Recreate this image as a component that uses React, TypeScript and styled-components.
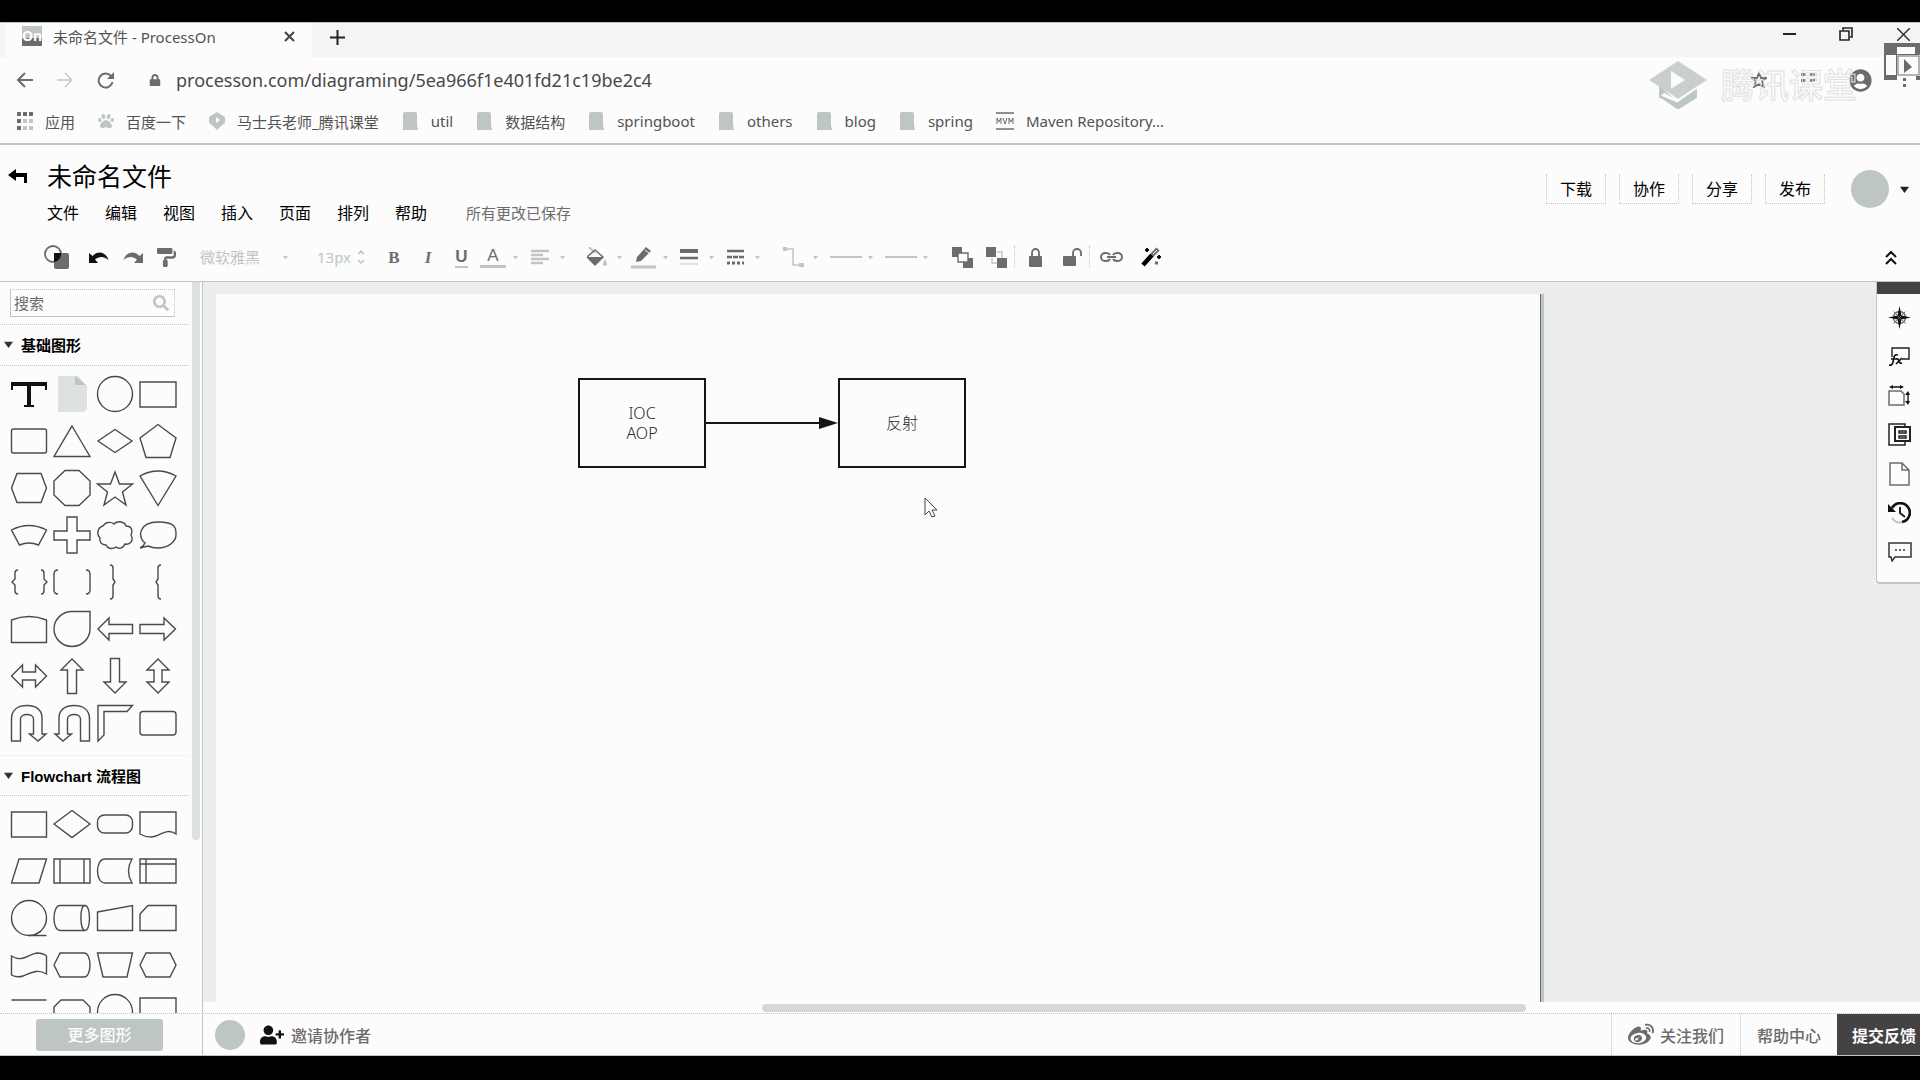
import React from "react";
import styled, { createGlobalStyle } from "styled-components";
import { FaLock, FaUserPlus, FaWeibo, FaSearch, FaPaintRoller, FaPaw, FaUserCircle } from "react-icons/fa";

const ink = "#6f6b6c";
const soft = "#bec6c5";
const paper = "#fcfcfc";
const sans = `"Noto Sans", "Noto Sans CJK SC", sans-serif`;

const GlobalStyle = createGlobalStyle`
  * { box-sizing: border-box; }
  body { margin: 0; background: #000; font-family: ${sans}; color: #000; }
  button, input, select { font: inherit; color: inherit; border: 0; padding: 0; margin: 0; background: none; }
  a { color: inherit; text-decoration: none; }
  svg { display: block; flex: none; }
  h1, h2 { margin: 0; }
`;

const Screen = styled.div`
  height: 100vh;
  padding: 22px 0 24px;
  display: flex;
  flex-direction: column;
  overflow: hidden;
  position: relative;
`;

/* ---------- browser chrome ---------- */

const TabStrip = styled.div`
  flex: none;
  height: 35px;
  display: flex;
  align-items: stretch;
  background: #f3f5f5;
  border-top: 1px solid ${soft};
  padding-left: 6px;
`;

const BrowserTab = styled.div`
  width: 306px;
  padding: 0 14px 8px 16px;
  background: ${paper};
  display: flex;
  align-items: center;
  gap: 11px;
  font-size: 15px;
  color: #555253;
`;

const Favicon = styled.span`
  width: 20px;
  height: 20px;
  background: linear-gradient(${soft} 60%, ${ink} 60%);
  color: ${paper};
  font-size: 14px;
  font-weight: 700;
  line-height: 19px;
  text-align: center;
`;

const TabTitle = styled.span`
  flex: 1;
  white-space: nowrap;
`;

const PlainButton = styled.button`
  width: ${(p: { $w?: number }) => p.$w ?? 20}px;
  display: flex;
  align-items: center;
  justify-content: center;
`;

const WindowButtons = styled.div`
  margin-left: auto;
  display: flex;
  padding: 0 7px 12px 0;
  gap: 37px;
`;

const AddressBar = styled.div`
  flex: none;
  height: 46px;
  background: ${paper};
  display: flex;
  align-items: center;
  padding: 0 13px 0 15px;
`;

const NavButtons = styled.div`
  display: flex;
  gap: 20px;
  margin-right: 34px;
`;

const Url = styled.input`
  flex: 1;
  min-width: 0;
  margin-left: 15px;
  font-size: 18px;
  outline: 0;
  color: #4a4748;
`;

const BrowserTools = styled.div`
  display: flex;
  align-items: center;
  color: ${ink};
  gap: 31px;
`;

const Bookmarks = styled.nav`
  flex: none;
  height: 42px;
  background: ${paper};
  border-bottom: 2px solid ${soft};
  display: flex;
  align-items: center;
  gap: 23px;
  padding: 0 17px 4px;
`;

const Bookmark = styled.a`
  display: flex;
  align-items: center;
  gap: 12px;
  font-size: 15px;
  color: #555253;
  white-space: nowrap;
`;

const Watermark = styled.div`
  position: absolute;
  top: 60px;
  right: 63px;
  display: flex;
  align-items: center;
  gap: 14px;
  pointer-events: none;
  font-size: 34px;
  line-height: 50px;
  font-weight: 500;
  color: transparent;
  -webkit-text-stroke: 1px #dde2e2;
`;

const FloatingPlayer = styled.div`
  position: absolute;
  top: 43px;
  right: 0;
`;

/* ---------- document header ---------- */

const DocHeader = styled.header`
  flex: none;
  height: 90px;
  background: ${paper};
  display: flex;
  align-items: flex-start;
  padding: 13px 11px 0 8px;
`;

const BackButton = styled.button`
  width: 22px;
  height: 37px;
  margin-right: 17px;
`;

const TitleBlock = styled.div`
  flex: 1;
`;

const DocTitle = styled.h1`
  font-size: 25px;
  line-height: 36px;
  font-weight: 400;
`;

const MenuRow = styled.div`
  display: flex;
  align-items: center;
  gap: 26px;
  height: 36px;
  font-size: 16px;
`;

const SaveState = styled.span`
  font-size: 15px;
  color: ${ink};
  margin-left: 13px;
`;

const Actions = styled.div`
  display: flex;
  align-items: center;
  gap: 13px;
  padding-top: 12px;
`;

const ActionButton = styled.button`
  width: 60px;
  height: 30px;
  border: 1px dotted ${soft};
  border-top-color: transparent;
  font-size: 16px;
  line-height: 26px;
`;

const Avatar = styled.span`
  width: ${(p: { $size: number }) => p.$size}px;
  height: ${(p: { $size: number }) => p.$size}px;
  border-radius: 50%;
  background: ${soft};
`;

const Account = styled.button`
  display: flex;
  align-items: center;
  gap: 11px;
  margin-left: 13px;
`;

/* ---------- toolbar ---------- */

const Toolbar = styled.div`
  flex: none;
  height: 47px;
  background: ${paper};
  border-bottom: 1px solid ${soft};
  display: flex;
  align-items: center;
  padding: 0 23px 2px 36px;
  color: ${ink};
`;

const ToolSet = styled.div`
  display: flex;
  align-items: center;
  gap: ${(p: { $gap?: number; $lead?: number }) => p.$gap ?? 0}px;
  margin-left: ${(p: { $gap?: number; $lead?: number }) => p.$lead ?? 0}px;
`;

const Tool = styled.button`
  width: ${(p: { $w: number }) => p.$w}px;
  height: 30px;
  display: flex;
  align-items: center;
  justify-content: center;
`;

const DropTool = styled.button`
  height: 30px;
  display: flex;
  align-items: center;
  gap: 5px;
`;

const ToolFace = styled.span`
  width: ${(p: { $w?: number }) => p.$w ?? 30}px;
  display: flex;
  justify-content: center;
`;

const Letter = styled.span`
  font-family: "Liberation Sans", Arial, sans-serif;
  font-size: 17px;
  line-height: 19px;
`;

const BoldLetter = styled(Letter)`
  font-family: "Liberation Serif", serif;
  font-weight: 700;
`;

const ItalicLetter = styled(BoldLetter)`
  font-style: italic;
`;

const UnderLetter = styled(Letter)`
  border-bottom: 2px solid ${soft};
  font-weight: 700;
`;

const ColorLetter = styled(Letter)`
  width: 26px;
  border-bottom: 3px solid ${soft};
  text-align: center;
`;

const FontSelect = styled.select`
  appearance: none;
  width: 80px;
  font-size: 15px;
  color: ${soft};
`;

const SizeInput = styled.input`
  width: 40px;
  font-size: 15px;
  color: ${soft};
`;

const Separator = styled.span`
  height: 22px;
  border-left: 1px dotted ${soft};
`;

const CollapseButton = styled(Tool)`
  margin-left: auto;
`;

/* ---------- workspace ---------- */

const Workspace = styled.div`
  flex: 1;
  min-height: 0;
  display: flex;
  background: ${paper};
`;

const Sidebar = styled.aside`
  flex: none;
  width: 203px;
  border-right: 1px solid ${soft};
  display: flex;
  overflow: hidden;
`;

const Library = styled.div`
  width: 189px;
  overflow: hidden;
`;

const SearchRow = styled.div`
  padding: 7px 14px 7px 10px;
  border-bottom: 1px dotted ${soft};
`;

const SearchBox = styled.label`
  height: 28px;
  display: flex;
  align-items: center;
  border: 1px solid ${soft};
  border-top-style: dotted;
  border-right-style: dotted;
  padding: 0 5px 0 3px;
  color: ${soft};
`;

const SearchInput = styled.input`
  flex: 1;
  min-width: 0;
  font-size: 15px;
  color: ${ink};
  outline: 0;
  &::placeholder { color: ${ink}; opacity: 1; }
`;

const SectionTitle = styled.h2`
  height: 41px;
  border-bottom: 1px dotted ${soft};
  border-top: ${(p: { $ruled?: boolean }) => (p.$ruled ? `1px dotted #e6e9e9` : "0")};
  display: flex;
  align-items: center;
  gap: 8px;
  padding: 0 0 1px 4px;
  font-family: "Liberation Sans", "Noto Sans CJK SC", Arial, sans-serif;
  font-size: 15px;
  font-weight: 700;
`;

const ShapeGrid = styled.div`
  display: grid;
  grid-template-columns: repeat(4, 43px);
  grid-auto-rows: 47px;
  padding: 4px 0 9px 7px;
`;

const ShapeCell = styled.button`
  display: flex;
  align-items: center;
  justify-content: center;
`;

const ShapeSvg = styled.svg`
  width: 42px;
  height: 42px;
  fill: none;
  stroke: #4c494a;
  stroke-width: 1.4;
`;

const SideScroll = styled.div`
  width: 8px;
  margin-left: 3px;
  height: 558px;
  background: #dce0e0;
  border-radius: 0 0 4px 4px;
`;

const CanvasArea = styled.main`
  flex: 1;
  min-width: 0;
  display: flex;
  flex-direction: column;
  position: relative;
`;

const Desk = styled.div`
  flex: 1;
  min-height: 0;
  padding: 12px 0 0 13px;
  background: #eceeee;
  overflow: hidden;
`;

const Sheet = styled.div`
  width: 1324px;
  height: 100%;
  background: ${paper};
  box-shadow: 1px 0 0 ${ink}, 4px 0 0 ${soft};
  position: relative;
`;

const Node = styled.div`
  position: absolute;
  left: ${(p: { $x: number }) => p.$x}px;
  top: 84px;
  width: 128px;
  height: 90px;
  border: 2px solid #161516;
  display: flex;
  align-items: center;
  justify-content: center;
  text-align: center;
  font-size: 16px;
  line-height: 20px;
  font-weight: 300;
  color: #2d2b2c;
`;

const Connector = styled.svg`
  position: absolute;
  left: 490px;
  top: 122px;
`;

const Pointer = styled.svg`
  position: absolute;
  left: 708px;
  top: 203px;
`;

const ScrollTrack = styled.div`
  flex: none;
  height: 11px;
  padding: 2px 394px 1px 559px;
`;

const ScrollThumb = styled.div`
  height: 8px;
  border-radius: 4px;
  background: #d3d9d8;
`;

const Dock = styled.div`
  position: absolute;
  top: 0;
  right: 0;
  width: 44px;
  background: ${paper};
  border: 1px solid ${soft};
  border-width: 0 0 2px 1px;
  border-radius: 0 0 0 4px;
  padding-bottom: 11px;
`;

const DockHandle = styled.div`
  height: 12px;
  margin-bottom: 4px;
  background: #454243;
`;

const DockButton = styled.button`
  width: 43px;
  height: 39px;
  padding-left: 2px;
  display: flex;
  align-items: center;
  justify-content: center;
`;

/* ---------- footer ---------- */

const Footer = styled.footer`
  flex: none;
  height: 43px;
  background: ${paper};
  border-top: 1px dotted ${soft};
  border-bottom: 1px solid ${soft};
  display: flex;
  align-items: stretch;
  font-size: 16px;
  font-weight: 500;
  color: ${ink};
`;

const MoreCell = styled.div`
  width: 203px;
  border-right: 1px solid ${soft};
  display: flex;
  align-items: center;
  padding-left: 36px;
`;

const MoreButton = styled.button`
  width: 127px;
  height: 32px;
  border-radius: 3px;
  background: ${soft};
  color: ${paper};
  line-height: 30px;
`;

const Invite = styled.button`
  display: flex;
  align-items: center;
  margin-left: 15px;
  gap: 7px;
`;

const FooterPeople = styled.div`
  flex: 1;
  display: flex;
  align-items: center;
  padding-left: 12px;
`;

const FooterLink = styled.a`
  display: flex;
  align-items: center;
  gap: 6px;
  padding: 0 16px;
  border-left: 1px dotted ${soft};
`;

const Feedback = styled.button`
  width: 83px;
  padding-left: 15px;
  text-align: left;
  background: #454243;
  color: ${paper};
  font-weight: 700;
`;

/* ---------- drawings ---------- */

const Caret = ({ color = soft, size = 5 }: { color?: string; size?: number }) => (
  <svg width={size} height={size} viewBox="0 0 10 10" fill={color}><path d="M0 2h10L5 9z" /></svg>
);

const Line = ({ d, w = 20, h = w, sw = 2, color = ink, box }: { d: string; w?: number; h?: number; sw?: number; color?: string; box?: string }) => (
  <svg width={w} height={h} viewBox={box ?? `0 0 ${w} ${h}`} fill="none" stroke={color} strokeWidth={sw}><path d={d} /></svg>
);

const Folder = () => (
  <svg width="17" height="18" viewBox="0 0 17 18" fill={soft}><path d="M1 2a2 2 0 0 1 2-2h10a2 2 0 0 1 2 2v11l1 5H1z" /></svg>
);

const Hat = ({ w }: { w: number }) => (
  <svg width={w} height={w * 0.84} viewBox="0 0 58 49">
    <path fill="#c8cfce" d="M29 0 58 19 29 38 0 19z" />
    <path fill={soft} d="M10 25v12l3 1 16 11 19-12v-9L29 41z" />
    <path fill={paper} d="M22 10v18l14-9zM12 35l17 7 1-2-15-8z" />
  </svg>
);

const SmallHat = () => (
  <svg width="16" height="18" viewBox="0 0 16 18">
    <path fill={soft} d="M8 0 16 5v6l-3 2-5 5-5-5-3-2V5z" />
    <path fill={paper} d="M7 5v6l4-3z" />
  </svg>
);

const AppsIcon = () => (
  <svg width="16" height="18" viewBox="0 0 16 18">
    {[0, 1, 2].map((r) => [0, 1, 2].map((c) => (
      <rect key={`${r}${c}`} x={c * 6} y={r * 7} width="4" height="4" fill={r === 0 || c === 0 ? ink : soft} />
    )))}
  </svg>
);

const MavenIcon = () => (
  <svg width="18" height="18" viewBox="0 0 18 18">
    <path stroke={ink} strokeWidth="1.4" d="M0 1h18M0 17h18" />
    <path stroke={ink} fill="none" d="M1 12V6l2 4 2-4v6M7 6l2 6 2-6M13 12V6l2 4 2-4v6" />
  </svg>
);

const bookmarks: { icon: React.ReactNode; label: string }[] = [
  { icon: <AppsIcon />, label: "应用" },
  { icon: <FaPaw size={16} color={soft} />, label: "百度一下" },
  { icon: <SmallHat />, label: "马士兵老师_腾讯课堂" },
  { icon: <Folder />, label: "util" },
  { icon: <Folder />, label: "数据结构" },
  { icon: <Folder />, label: "springboot" },
  { icon: <Folder />, label: "others" },
  { icon: <Folder />, label: "blog" },
  { icon: <Folder />, label: "spring" },
  { icon: <MavenIcon />, label: "Maven Repository..." },
];

const basicShapes: [string, React.ReactNode][] = [
  ["文本", <g key="t" stroke="#111"><path strokeWidth="4" d="M-18-10H18M0-10V12" /><path strokeWidth="2" d="M-17-8v4M17-8v4M-5 12H5" /></g>],
  ["备注", <g key="n" stroke="none"><path fill="#dde1e1" d="M-14-18H6L15-8V15L12 18H-14z" /><path fill={soft} d="M3-18l11 9H3z" /></g>],
  ["圆形", <circle key="c" r="17.5" />],
  ["矩形", <path key="r" d="M-18-12H18V13H-18z" />],
  ["圆角矩形", <rect key="rr" x="-17.5" y="-12" width="35" height="24" rx="2" />],
  ["三角形", <path key="tr" d="M0-15 18 15.500H-18z" />],
  ["菱形", <path key="d" d="M0-11.500 17 0 0 11.500-17 0z" />],
  ["五边形", <path key="p" d="M0-16.500 18-3 12 16.500H-12L-18-3z" />],
  ["六边形", <path key="h" d="M-17.500 0-12-14.500H12L17.500 0 12 14.500H-12z" />],
  ["八边形", <path key="o" d="M-18-7-7-17.500H7L18-7V7L7 17.500H-7L-18 7z" />],
  ["五角星", <path key="s" d="M0-16 4.500-4H17.500L7.500 4 11 17 0 9-11 17-7.500 4-17.500-4H-4.500z" />],
  ["扇形", <path key="f" d="M-18-12Q0-22 18-12L0 17.500z" />],
  ["弧形", <path key="a" d="M-17.500-5Q0-14 17.500-5L9.500 10Q0 6-9.500 10z" />],
  ["十字", <path key="x" d="M-5-18H5V-4H18V5H5V18H-5V5H-18V-4H-5z" />],
  ["云", <path key="cl" d="M-12-9C-9-14-3-13-1-11 3-15 10-13 11-9 17-9 18-4 16 0 19 6 15 10 10 9 8 14 3 14 1 12-3 15-8 13-9 10-14 10-16 6-15 3-19-1-17-8-12-9z" />],
  ["气泡", <path key="b" d="M-13 8C-21 2-19-13 0-13S18-6 18 0 11 13 0 13Q-6 13-10 11L-18 13Q-14 11-13 8z" />],
  ["双大括号", <path key="br" d="M-11-12Q-14-12-14-9V-3L-17 0-14 3V9Q-14 12-11 12M12-12Q15-12 15-9V-3L18 0 15 3V9Q15 12 12 12" />],
  ["双括号", <path key="bk" d="M-14-12Q-18-12-18-8V8Q-18 12-14 12M14-12Q18-12 18-8V8Q18 12 14 12" />],
  ["右大括号", <path key="rb" d="M-5-17Q-2-17-2-14V-3L0 0-2 3V14Q-2 17-5 17" />],
  ["左大括号", <path key="lb" d="M3-17Q0-17 0-14V-3L-2 0 0 3V14Q0 17 3 17" />],
  ["拱形", <path key="ar" d="M-17.500-9Q0-16 17.500-9V13.500H-17.500z" />],
  ["水滴", <path key="td" d="M0-17.500H18V0A18 17.500 0 1 1 0-17.500z" />],
  ["左箭头", <path key="la" d="M-17 0-6-11V-4.500H17.500V4.500H-6V11z" />],
  ["右箭头", <path key="ra" d="M17.500 0 6-11V-4.500H-18V4.500H6V11z" />],
  ["左右箭头", <path key="lr" d="M-17.500 0-6.500-11V-4H6.500V-11L17.500 0 6.500 11V4H-6.500V11z" />],
  ["上箭头", <path key="ua" d="M0-17 11-6H4.500V17.500H-4.500V-6H-11z" />],
  ["下箭头", <path key="da" d="M0 17-11 6H-4.500V-17.500H4.500V6H11z" />],
  ["上下箭头", <path key="ud" d="M0-17 11-6H4V6H11L0 17-11 6H-4V-6H-11z" />],
  ["右转箭头", <path key="rt" d="M-17.500 18V-4C-17.500-14-10-17.500-2-17.500S13-14 13-5V11H17L9 18 .500 11H4.500V-4C4.500-10-8.500-10-8.500-4V18z" />],
  ["左转箭头", <path key="lt" d="M17.500 18V-4C17.500-14 10-17.500 2-17.500S-13-14-13-5V11H-17L-9 18-.500 11H-4.500V-4C-4.500-10 8.500-10 8.500-4V18z" />],
  ["折角", <path key="co" d="M-17-17.500H17.500L12-11.500H-11V12L-17 18z" />],
  ["容器", <rect key="ct" x="-18" y="-11.500" width="36" height="23.500" rx="3" />],
];

const flowShapes: [string, React.ReactNode][] = [
  ["流程", <path key="1" d="M-17.500-12H17.500V13H-17.500z" />],
  ["判定", <path key="2" d="M0-13.500 18 0 0 13.500-18 0z" />],
  ["开始/结束", <rect key="3" x="-17.500" y="-9" width="35" height="18" rx="7" />],
  ["文档", <path key="4" d="M-18-12H18V10C8 3 2 13-7 13Q-13 13-18 10z" />],
  ["数据", <path key="5" d="M-10-12H17.500L10 12H-17.500z" />],
  ["子流程", <path key="6" d="M-18-12H18V12H-18zM-12-12V12M12-12V12" />],
  ["外部数据", <path key="7" d="M17-12H-10C-20-12-20 12-10 12H17Q10 0 17-12z" />],
  ["内部存储", <path key="8" d="M-18-12H18V12H-18zM-12-12V12M-18-7H18" />],
  ["队列数据", <g key="9"><circle r="17.500" /><path d="M0 17.500H17.500M5 17Q11 14 12 13" /></g>],
  ["数据库", <path key="10" d="M13-12.500H-12C-20-12.500-20 12.500-12 12.500H13C19 12.500 19-12.500 13-12.500S8 12.500 13 12.500" />],
  ["人工输入", <path key="11" d="M-17.500-6 17.500-12.500V12.500H-17.500z" />],
  ["卡片", <path key="12" d="M-18-4-10-12.500H18V12.500H-18z" />],
  ["条带", <path key="13" d="M-17.500-9C-6-2-1-11 8-12Q14-12 17.500-9V9C8 3 0 9-6 11Q-12 13-17.500 10z" />],
  ["展示", <path key="14" d="M-18 0-12-12H12C20-12 20 12 12 12H-12z" />],
  ["人工操作", <path key="15" d="M-17.500-12H17.500L12 12H-12z" />],
  ["准备", <path key="16" d="M-18 0-12-12H12L18 0 12 12H-12z" />],
  ["并行模式", <path key="17" d="M-17.500-12H17.500M-17.500 12H17.500" />],
  ["循环限值", <path key="18" d="M-18 12V-5L-11-12H11L18-5V12z" />],
  ["页面内引用", <circle key="19" r="17.500" />],
  ["页面间引用", <path key="20" d="M-18-14H18V8L0 16-18 8z" />],
];

const Shapes = ({ items }: { items: [string, React.ReactNode][] }) => (
  <ShapeGrid>
    {items.map(([name, art]) => (
      <ShapeCell key={name} aria-label={name}>
        <ShapeSvg viewBox="-21 -21 42 42">{art}</ShapeSvg>
      </ShapeCell>
    ))}
  </ShapeGrid>
);

const UndoIcon = ({ color, flip }: { color: string; flip?: boolean }) => (
  <svg width="20" height="14" viewBox="0 0 20 14" fill={color}>
    <path transform={flip ? "matrix(-1 0 0 1 20 0)" : undefined} d="M0 3v10h9L6 9.500C10 6 15 6 19.500 10 17 2 9 0 3.500 6z" />
  </svg>
);

const ShapesIcon = () => (
  <svg width="26" height="24" viewBox="0 0 26 24">
    <rect x="10" y="8" width="15" height="16" rx="2" fill={ink} />
    <circle cx="9" cy="9" r="8" fill="none" stroke={ink} strokeWidth="1.8" />
    <path d="M10 8h7a8 8 0 0 1-7 9z" fill="#111" />
  </svg>
);

const BucketIcon = () => (
  <svg width="21" height="20" viewBox="0 0 21 20">
    <path d="M2 0l6 6" stroke={soft} strokeWidth="2" />
    <path d="M8 3l8 7-8 8-8-8z" fill="none" stroke={ink} strokeWidth="1.500" />
    <path d="M0 10h16l-8 8z" fill={ink} />
    <path d="M18 12q4 7 0 7t0-7" fill={soft} />
  </svg>
);

const PencilIcon = () => (
  <svg width="25" height="23" viewBox="0 0 25 23">
    <path d="M5 16l1-5L15 1l5 4-10 10z" fill={ink} />
    <path d="M14 4l4 3" stroke={paper} />
    <path d="M0 21h25" stroke={soft} strokeWidth="3" />
  </svg>
);

const LayerIcon = ({ front }: { front?: boolean }) => (
  <svg width="22" height="21" viewBox="0 0 22 21">
    <rect width="10" height="10" fill={ink} />
    <rect x="11" y="11" width="10" height="10" fill={ink} />
    <path d={front ? "M6 6h10v9H6z" : "M11 5h5v6M6 11v5h5"} fill={front ? paper : "none"} stroke={front ? ink : soft} strokeWidth="1.400" />
  </svg>
);

const UnlockIcon = () => (
  <svg width="20" height="18" viewBox="0 0 20 18">
    <rect y="8" width="13" height="10" rx="1" fill={ink} />
    <path d="M10 8V5a4 4 0 0 1 8 0v3" fill="none" stroke={ink} strokeWidth="1.800" />
  </svg>
);

const LockIcon = () => (
  <svg width="13" height="19" viewBox="0 0 13 19">
    <rect y="8" width="13" height="11" rx="1" fill={ink} />
    <path d="M3 8V5a3.500 4 0 0 1 7 0v3" fill="none" stroke={ink} strokeWidth="1.800" />
  </svg>
);

const LinkIcon = () => (
  <svg width="23" height="10" viewBox="0 0 23 10" fill="none" stroke={ink} strokeWidth="2">
    <path d="M10 3Q9 1 6 1H5a4 4 0 0 0 0 8h1q3 0 4-2M13 3q1-2 4-2h1a4 4 0 0 1 0 8h-1q-3 0-4-2M7 5h9" />
  </svg>
);

const WandIcon = () => (
  <svg width="20" height="20" viewBox="0 0 20 20">
    <path d="M2 18 11 8" stroke="#000" strokeWidth="4.500" />
    <path d="M11 8l6-6" stroke={ink} strokeWidth="4.500" />
    <path d="M12 7l4-4" stroke={paper} />
    <path d="M4 3h4M6 1v4M16 10h4M18 8v4" stroke="#111" strokeWidth="2" />
    <path d="M14 16h3" stroke={ink} strokeWidth="3" />
  </svg>
);

const dockIcons: [string, React.ReactNode][] = [
  ["导航", <svg key="n" width="23" height="23" viewBox="-11.500 -11.500 23 23"><circle r="6" fill="none" stroke={ink} strokeWidth="1.500" /><path fill="#111" d="M0-11.500 2-2 11.500 0 2 2 0 11.500-2 2-11.500 0-2-2z" /><path stroke={ink} d="M-6-6 6 6M-6 6 6-6" /></svg>],
  ["图形", <svg key="f" width="22" height="20" viewBox="0 0 22 20" fill="none"><path stroke="#222" strokeWidth="1.400" d="M3 10V1h17v11h-7" /><path stroke="#111" strokeWidth="1.700" d="M0 18q3 1 4-3l1-5q1-3 4-2M2 12h6M7 12q2-1 3 2t3 2M13 11l-6 6" /></svg>],
  ["尺寸", <svg key="m" width="23" height="21" viewBox="0 0 23 21" fill="none"><path stroke={ink} strokeWidth="1.500" d="M1 6h12l3 3v11H1z" /><path fill="#111" d="M1 2l4-2v4zM16 2l-4-2v4zM20 6l-3 4h5zM20 20l-3-4h5z" /><path stroke="#111" strokeWidth="1.300" d="M4 2h9M20 9v8" /></svg>],
  ["数据", <svg key="d" width="23" height="23" viewBox="0 0 23 23" fill="none" stroke="#222" strokeWidth="1.500"><path d="M17 3V1H1v21h16v-3" /><path strokeWidth="2" d="M7 4h15v14H7z" /><path d="M11 8h7v2h-7zM11 13h7v2h-7z" /></svg>],
  ["页面", <svg key="p" width="21" height="24" viewBox="0 0 21 24" fill="none" stroke={ink} strokeWidth="1.500"><path d="M1 1h12l7 7v15H1zM13 1v7h7" /></svg>],
  ["历史", <svg key="h" width="23" height="22" viewBox="0 0 23 22" fill="none"><path stroke="#111" strokeWidth="2.600" d="M4 6a9.500 9.500 0 1 1 10 14" /><path stroke={soft} strokeWidth="2" d="M14 20q-6 2-10-4" /><path fill="#111" d="M0 2v8h8z" /><path stroke="#222" strokeWidth="2" d="M12 5v6l5 4" /></svg>],
  ["评论", <svg key="c" width="24" height="20" viewBox="0 0 24 20" fill="none" stroke="#333" strokeWidth="1.500"><path d="M1 1h22v14H7l-3 4-1-4H1z" /><path strokeDasharray="2 2" d="M7 8h11" /></svg>],
];

export default function App() {
  return (
    <Screen>
      <GlobalStyle />
      <TabStrip>
        <BrowserTab>
          <Favicon>On</Favicon>
          <TabTitle>未命名文件 - ProcessOn</TabTitle>
          <PlainButton $w={18} aria-label="关闭标签页"><Line w={11} d="M1 1l9 9M10 1l-9 9" color="#444" /></PlainButton>
        </BrowserTab>
        <PlainButton $w={50} aria-label="新标签页"><Line w={15} h={23} d="M7.500 1v15M0 8.500h15" color="#222" /></PlainButton>
        <WindowButtons>
          <PlainButton aria-label="最小化"><Line w={13} h={2} d="M0 1h13" color="#222" /></PlainButton>
          <PlainButton aria-label="还原"><Line w={14} sw={1.6} d="M1 4h9v9H1zM4 3V1h9v9h-2" color="#222" /></PlainButton>
          <PlainButton aria-label="关闭"><Line w={13} sw={1.5} d="M0 0l13 13M13 0L0 13" color="#333" /></PlainButton>
        </WindowButtons>
      </TabStrip>

      <AddressBar>
        <NavButtons>
          <PlainButton aria-label="后退"><Line w={16} d="M16 8H2M8 1L1 8l7 7" /></PlainButton>
          <PlainButton aria-label="前进"><Line w={16} sw={1.3} d="M0 8h14M8 1l7 7-7 7" color={soft} /></PlainButton>
          <PlainButton aria-label="刷新">
            <svg width="17" height="17" viewBox="0 0 17 17"><path d="M14 4A7 7 0 1 0 15.500 10" fill="none" stroke={ink} strokeWidth="2" /><path d="M17 0v7h-7z" fill={ink} /></svg>
          </PlainButton>
        </NavButtons>
        <FaLock size={12} color={ink} />
        <Url aria-label="地址" defaultValue="processon.com/diagraming/5ea966f1e401fd21c19be2c4" />
        <BrowserTools>
          <PlainButton $w={18} aria-label="收藏"><Line w={16} sw={1.800} d="M8 1l2 5h5l-4 3 2 6-5-3-5 3 2-6-4-3h5z" /></PlainButton>
          <PlainButton $w={18} aria-label="扩展"><svg width="14" height="14" fill={ink}><path d="M0 0h5v3H0zM9 0h5v3H9zM0 6h5v3H0zM9 6h5v3H9z" /></svg></PlainButton>
          <PlainButton $w={24} aria-label="用户"><FaUserCircle size={23} /></PlainButton>
          <PlainButton $w={4} aria-label="菜单"><svg width="4" height="16" fill={ink}><path d="M0 0h3v3H0zM0 6h3v3H0zM0 12h3v3H0z" /></svg></PlainButton>
        </BrowserTools>
      </AddressBar>

      <Bookmarks>
        {bookmarks.map((b) => <Bookmark key={b.label} href="#">{b.icon}{b.label}</Bookmark>)}
      </Bookmarks>

      <DocHeader>
        <BackButton aria-label="返回">
          <svg width="20" height="15" viewBox="0 0 20 15"><path d="M0 6l8-6v4h11v10h-3V8H8v4z" /></svg>
        </BackButton>
        <TitleBlock>
          <DocTitle>未命名文件</DocTitle>
          <MenuRow>
            {["文件", "编辑", "视图", "插入", "页面", "排列", "帮助"].map((m) => <button key={m}>{m}</button>)}
            <SaveState>所有更改已保存</SaveState>
          </MenuRow>
        </TitleBlock>
        <Actions>
          {["下载", "协作", "分享", "发布"].map((a) => <ActionButton key={a}>{a}</ActionButton>)}
          <Account aria-label="账户"><Avatar $size={38} /><Caret color="#222" size={9} /></Account>
        </Actions>
      </DocHeader>

      <Toolbar>
        <ToolSet>
          <Tool $w={42} aria-label="图形"><ShapesIcon /></Tool>
          <Tool $w={42} aria-label="撤销"><UndoIcon color="#111" /></Tool>
          <Tool $w={26} aria-label="恢复"><UndoIcon color={ink} flip /></Tool>
          <Tool $w={40} aria-label="格式刷"><FaPaintRoller size={19} /></Tool>
        </ToolSet>
        <ToolSet $lead={14} $gap={3}>
          <FontSelect aria-label="字体" defaultValue="微软雅黑"><option>微软雅黑</option></FontSelect>
          <Caret />
        </ToolSet>
        <ToolSet $lead={29}>
          <SizeInput aria-label="字号" defaultValue="13px" />
          <Line w={8} h={14} sw={1.500} d="M1 4l3-3 3 3M1 10l3 3 3-3" color={soft} />
        </ToolSet>
        <ToolSet $lead={12}>
          <Tool $w={34} aria-label="粗体"><BoldLetter>B</BoldLetter></Tool>
          <Tool $w={34} aria-label="斜体"><ItalicLetter>I</ItalicLetter></Tool>
          <Tool $w={33} aria-label="下划线"><UnderLetter>U</UnderLetter></Tool>
        </ToolSet>
        <ToolSet $gap={7}>
          <DropTool aria-label="文字颜色"><ToolFace><ColorLetter>A</ColorLetter></ToolFace><Caret /></DropTool>
          <DropTool aria-label="对齐"><ToolFace><Line w={18} h={17} sw={2.500} color={soft} d="M0 2h18M0 6h12M0 10h18M0 14h12" /></ToolFace><Caret /></DropTool>
        </ToolSet>
        <ToolSet $lead={17} $gap={6}>
          <DropTool aria-label="填充"><ToolFace><BucketIcon /></ToolFace><Caret /></DropTool>
          <DropTool aria-label="线条颜色"><ToolFace><PencilIcon /></ToolFace><Caret /></DropTool>
          <DropTool aria-label="线条宽度"><ToolFace><svg width="18" height="17"><path d="M0 2h18" stroke={ink} strokeWidth="4" /><path d="M0 9h18" stroke={ink} strokeWidth="2.500" /><path d="M0 15h18" stroke={soft} /></svg></ToolFace><Caret /></DropTool>
          <DropTool aria-label="线条样式"><ToolFace><svg width="17" height="16" stroke={ink} strokeWidth="2.500"><path d="M0 2h17" /><path strokeDasharray="5 1" d="M0 8h17" /><path strokeDasharray="3 2" strokeWidth="3" d="M0 14h17" /></svg></ToolFace><Caret /></DropTool>
        </ToolSet>
        <ToolSet $lead={18} $gap={11}>
          <DropTool aria-label="连线类型"><ToolFace><svg width="21" height="20"><path d="M3 2h7v16h8" fill="none" stroke={soft} strokeWidth="1.500" /><path d="M0 0h4v4H0zM16 16h5v4h-5z" fill={soft} /></svg></ToolFace><Caret /></DropTool>
          <DropTool aria-label="起点"><ToolFace $w={34}><Line w={32} h={2} color={soft} d="M0 1h32" /></ToolFace><Caret /></DropTool>
          <DropTool aria-label="终点"><ToolFace $w={34}><Line w={32} h={2} color={soft} d="M0 1h32" /></ToolFace><Caret /></DropTool>
        </ToolSet>
        <ToolSet $lead={18}>
          <Tool $w={34} aria-label="置于顶层"><LayerIcon front /></Tool>
          <Tool $w={34} aria-label="置于底层"><LayerIcon /></Tool>
          <Separator />
          <Tool $w={41} aria-label="锁定"><LockIcon /></Tool>
          <Tool $w={33} aria-label="解锁"><UnlockIcon /></Tool>
          <Separator />
          <Tool $w={43} aria-label="链接"><LinkIcon /></Tool>
          <Tool $w={36} aria-label="美化"><WandIcon /></Tool>
        </ToolSet>
        <CollapseButton $w={12} aria-label="收起"><Line w={12} h={15} color="#111" d="M1 7l5-5 5 5M1 14l5-5 5 5" /></CollapseButton>
      </Toolbar>

      <Workspace>
        <Sidebar>
          <Library>
            <SearchRow>
              <SearchBox>
                <SearchInput aria-label="搜索" placeholder="搜索" />
                <FaSearch size={16} />
              </SearchBox>
            </SearchRow>
            <SectionTitle><Caret color="#333" size={9} />基础图形</SectionTitle>
            <Shapes items={basicShapes} />
            <SectionTitle $ruled><Caret color="#333" size={9} />Flowchart 流程图</SectionTitle>
            <Shapes items={flowShapes} />
          </Library>
          <SideScroll />
        </Sidebar>

        <CanvasArea>
          <Desk>
            <Sheet>
              <Node $x={362}>IOC<br />AOP</Node>
              <Node $x={622}>反射</Node>
              <Connector width="132" height="14" viewBox="0 0 132 14">
                <path d="M0 7h116" stroke="#161516" strokeWidth="2" /><path d="M113 1l19 6-19 6z" fill="#161516" />
              </Connector>
              <Pointer width="14" height="21" viewBox="0 0 14 21">
                <path d="M1 1v17l4-4 3 6 3-1-3-6h5z" fill={paper} stroke="#444" />
              </Pointer>
            </Sheet>
          </Desk>
          <ScrollTrack><ScrollThumb /></ScrollTrack>
          <Dock>
            <DockHandle />
            {dockIcons.map(([name, art]) => <DockButton key={name} aria-label={name}>{art}</DockButton>)}
          </Dock>
        </CanvasArea>
      </Workspace>

      <Footer>
        <MoreCell><MoreButton>更多图形</MoreButton></MoreCell>
        <FooterPeople>
          <Avatar $size={30} />
          <Invite><FaUserPlus size={24} color="#111" />邀请协作者</Invite>
        </FooterPeople>
        <FooterLink href="#"><FaWeibo size={26} />关注我们</FooterLink>
        <FooterLink href="#">帮助中心</FooterLink>
        <Feedback>提交反馈</Feedback>
      </Footer>

      <Watermark><Hat w={58} />腾讯课堂</Watermark>
      <FloatingPlayer>
        <svg width="36" height="37" viewBox="0 0 36 37">
          <path fill={ink} d="M0 0h36v12H13V37H0z" />
          <path fill={paper} d="M2 12h10v20H2zM13 4h18v7H13z" />
          <rect x="14" y="13" width="21" height="19" fill={paper} stroke={ink} />
          <path fill={ink} d="M20 16l8 8-8 6zM32 33h4v4h-4z" />
        </svg>
      </FloatingPlayer>
    </Screen>
  );
}
